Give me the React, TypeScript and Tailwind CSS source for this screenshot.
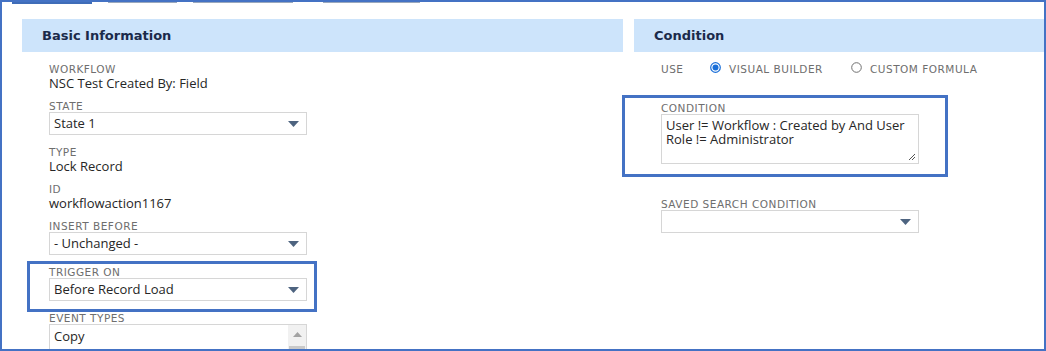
import React from "react";

/* ------------------------------------------------------------------ */
/*  Workflow action form – Basic Information / Condition panels        */
/* ------------------------------------------------------------------ */

const body = "font-['Open_Sans','Liberation_Sans',sans-serif]";
const small = "font-['DejaVu_Sans','Verdana',sans-serif] text-[10.5px] tracking-[0.5px] text-[#6e6e6e] uppercase";

function Caret() {
  return (
    <svg width="11" height="6" viewBox="0 0 11 6" className="shrink-0">
      <path d="M0 0 H11 L5.5 6 Z" fill="#4e6480" />
    </svg>
  );
}

function Label({ children }: { children: React.ReactNode }) {
  return <div className={`${small} leading-[12px]`}>{children}</div>;
}

function TextField({ label, value }: { label: string; value: string }) {
  return (
    <div className="mb-[9px]">
      <Label>{label}</Label>
      <div className="text-[13px] leading-[16px] text-[#262626]">{value}</div>
    </div>
  );
}

function Select({ value }: { value?: string }) {
  return (
    <div className="flex h-[23px] w-[258px] items-center justify-between border border-[#d6d6d6] bg-white pl-[4px] pr-[7px] text-[13px] text-[#262626]">
      <span>{value}</span>
      <Caret />
    </div>
  );
}

function SelectField({ label, value }: { label: string; value?: string }) {
  return (
    <div className="mb-[11px]">
      <Label>{label}</Label>
      <Select value={value} />
    </div>
  );
}

function Header({ title }: { title: string }) {
  return (
    <div className="flex h-[33px] items-center bg-[#cde4fb] pl-[20px] font-['DejaVu_Sans','Verdana',sans-serif] text-[13px] font-bold text-[#1b2a4a]">
      {title}
    </div>
  );
}

function Radio({ checked }: { checked?: boolean }) {
  return (
    <svg width="11" height="11" viewBox="0 0 11 11" className="shrink-0">
      {checked ? (
        <>
          <circle cx="5.5" cy="5.5" r="4.8" fill="white" stroke="#1a6fd8" strokeWidth="1.2" />
          <circle cx="5.5" cy="5.5" r="3" fill="#1a6fd8" />
        </>
      ) : (
        <circle cx="5.5" cy="5.5" r="4.8" fill="white" stroke="#6f6f6f" strokeWidth="1" />
      )}
    </svg>
  );
}

export default function App() {
  return (
    <div className={`relative h-[351px] w-[1046px] overflow-hidden border-2 border-[#4472c4] bg-white ${body}`}>
      {/* tab stubs along the top edge */}
      <div className="absolute -top-[2px] left-[10px] h-[4px] w-[80px] bg-[#3f6cb8]" />
      <div className="absolute top-0 left-[106px] h-[1px] w-[69px] bg-[#9aa8bd]" />
      <div className="absolute top-0 left-[191px] h-[1px] w-[100px] bg-[#9aa8bd]" />
      <div className="absolute top-0 left-[321px] h-[1px] w-[97px] bg-[#9aa8bd]" />

      <div className="flex gap-[11px] pt-[17px] pl-[20px]">
        {/* Basic Information */}
        <div className="w-[601px]">
          <Header title="Basic Information" />
          <div className="pt-[11px] pl-[27px]">
            <TextField label="Workflow" value="NSC Test Created By: Field" />
            <SelectField label="State" value="State 1" />
            <TextField label="Type" value="Lock Record" />
            <TextField label="ID" value="workflowaction1167" />
            <SelectField label="Insert Before" value="- Unchanged -" />
            <SelectField label="Trigger On" value="Before Record Load" />
            <div>
              <Label>Event Types</Label>
              <div className="flex h-[40px] w-[258px] border border-[#d6d6d6] bg-white">
                <div className="flex-1 pt-[3px] pl-[4px] text-[13px] leading-[16px] text-[#262626]">Copy</div>
                <div className="flex w-[18px] flex-col items-center bg-[#f1f1f1] pt-[7px]">
                  <svg width="9" height="5" viewBox="0 0 9 5">
                    <path d="M0 5 H9 L4.5 0 Z" fill="#a3a3a3" />
                  </svg>
                  <div className="mt-[9px] h-[14px] w-[16px] bg-[#c9c9c9]" />
                </div>
              </div>
            </div>
          </div>
        </div>

        {/* Condition */}
        <div className="flex-1">
          <Header title="Condition" />
          <div className="pl-[27px]">
            <div className={`flex h-[31px] items-center pt-[4px] ${small}`}>
              <span className="w-[49px]">Use</span>
              <span className="-mt-[5px] mr-[8px]"><Radio checked /></span>
              <span className="w-[122px]">Visual Builder</span>
              <span className="-mt-[5px] mr-[8px]"><Radio /></span>
              <span>Custom Formula</span>
            </div>
            <div className="pt-[19px]">
              <Label>Condition</Label>
              <div className="relative h-[50px] w-[258px] border border-[#d6d6d6] bg-white px-[4px] pt-[3px] text-[13px] leading-[14px] text-[#262626]">
                User != Workflow : Created by And User Role != Administrator
                <svg width="8" height="8" viewBox="0 0 8 8" className="absolute right-[2px] bottom-[2px]">
                  <path d="M7 1 L1 7 M7 4 L4 7" stroke="#555" strokeWidth="1" />
                </svg>
              </div>
            </div>
            <div className="pt-[34px]">
              <Label>Saved Search Condition</Label>
              <Select />
            </div>
          </div>
        </div>
      </div>

      {/* highlight annotations */}
      <div className="absolute top-[259px] left-[25px] h-[51px] w-[290px] border-[3px] border-[#4472c4]" />
      <div className="absolute top-[93px] left-[620px] h-[82px] w-[326px] border-[3px] border-[#4472c4]" />
    </div>
  );
}
